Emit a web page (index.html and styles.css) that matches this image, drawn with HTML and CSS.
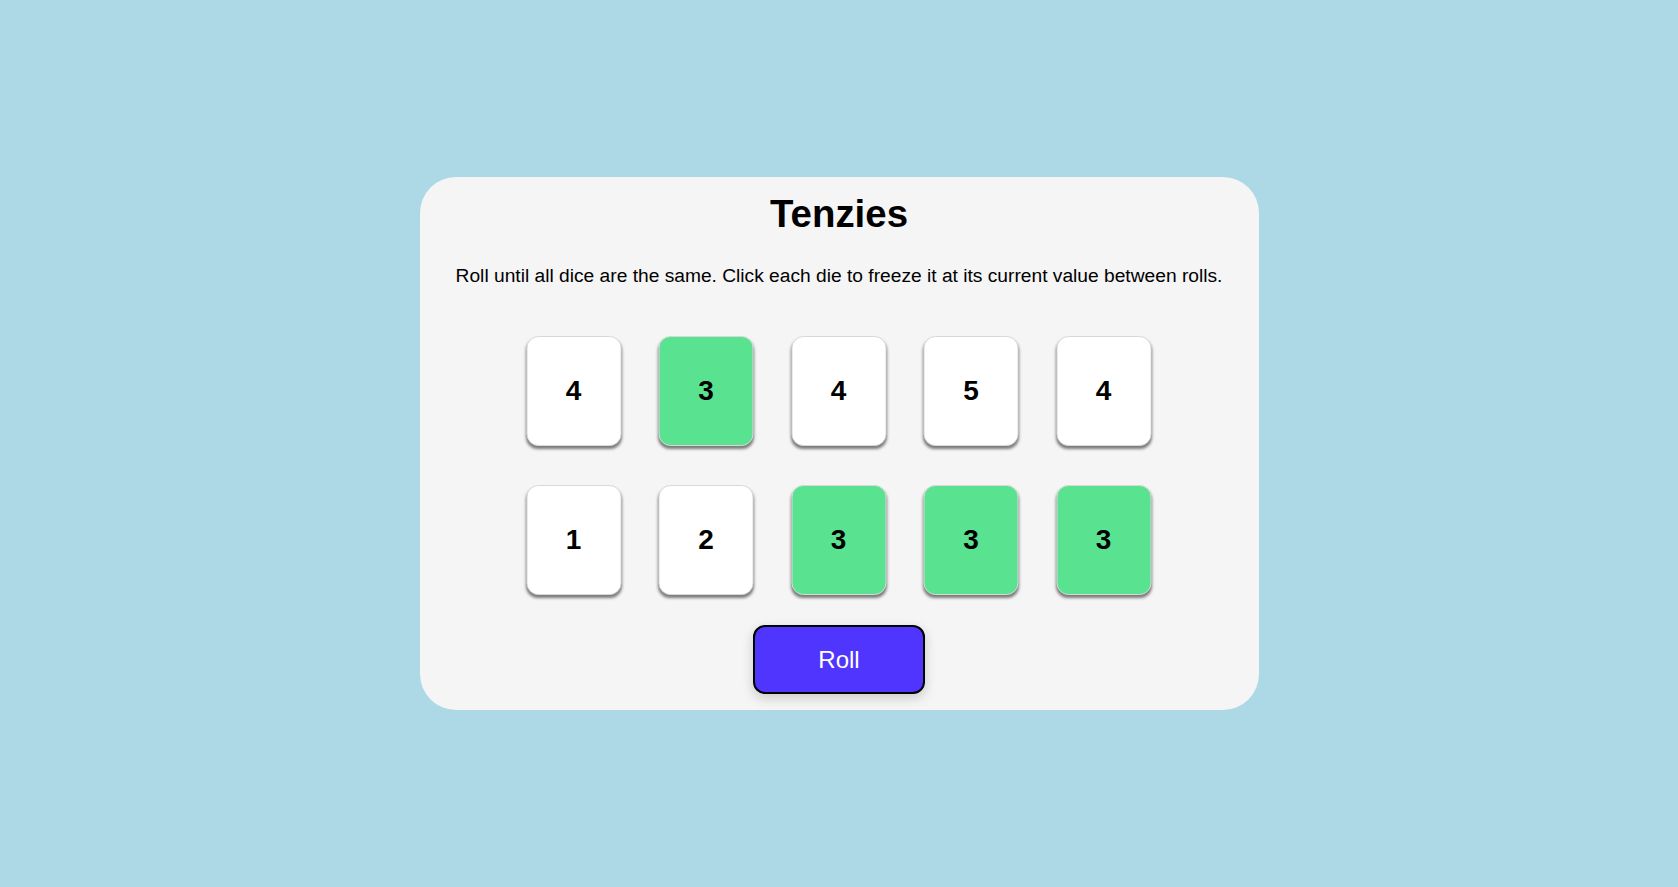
FILE: index.html
```html
<!DOCTYPE html>
<html lang="en">
<head>
<meta charset="utf-8">
<title>Tenzies</title>
<link rel="stylesheet" href="styles.css">
</head>
<body>
<main class="game">
  <h1 class="title">Tenzies</h1>
  <p class="instructions">Roll until all dice are the same. Click each die to freeze it at its current value between rolls.</p>
  <div class="dice">
    <button class="die">4</button>
    <button class="die held">3</button>
    <button class="die">4</button>
    <button class="die">5</button>
    <button class="die">4</button>
    <button class="die">1</button>
    <button class="die">2</button>
    <button class="die held">3</button>
    <button class="die held">3</button>
    <button class="die held">3</button>
  </div>
  <button class="roll">Roll</button>
</main>
</body>
</html>
```
FILE: styles.css
```css
html, body {
  margin: 0;
  padding: 0;
}
body {
  background: #add8e6;
  height: 100vh;
  display: flex;
  align-items: center;
  justify-content: center;
  font-family: "Liberation Sans", Arial, sans-serif;
}
.game {
  width: 839px;
  height: 533px;
  box-sizing: border-box;
  background: #f5f5f5;
  border-radius: 36px;
  display: flex;
  flex-direction: column;
  align-items: center;
  padding-top: 15px;
}
.title {
  margin: 0;
  font-size: 38.4px;
  font-weight: bold;
  color: #000;
}
.instructions {
  margin: 29px 0 0;
  font-size: 19.2px;
  color: #000;
  text-align: center;
}
.dice {
  margin-top: 49px;
  display: grid;
  grid-template-columns: repeat(5, 95px);
  grid-auto-rows: 110px;
  column-gap: 37.5px;
  row-gap: 39px;
  transform: translateX(-0.5px);
}
.die {
  background: #fff;
  border: 1px solid #d8d8d8;
  border-radius: 12px;
  box-shadow: 0 3px 3px rgba(0, 0, 0, 0.5);
  font-family: "Liberation Sans", Arial, sans-serif;
  font-size: 28px;
  font-weight: bold;
  color: #000;
  padding: 0;
  cursor: pointer;
}
.die.held {
  background: #59e391;
}
.roll {
  margin-top: 30px;
  width: 172px;
  height: 69px;
  background: #5035ff;
  color: #fff;
  border: 2px solid #000;
  border-radius: 12px;
  font-family: "Liberation Sans", Arial, sans-serif;
  font-size: 24px;
  box-shadow: 0 4px 12px rgba(0, 0, 0, 0.18);
  cursor: pointer;
}
```
